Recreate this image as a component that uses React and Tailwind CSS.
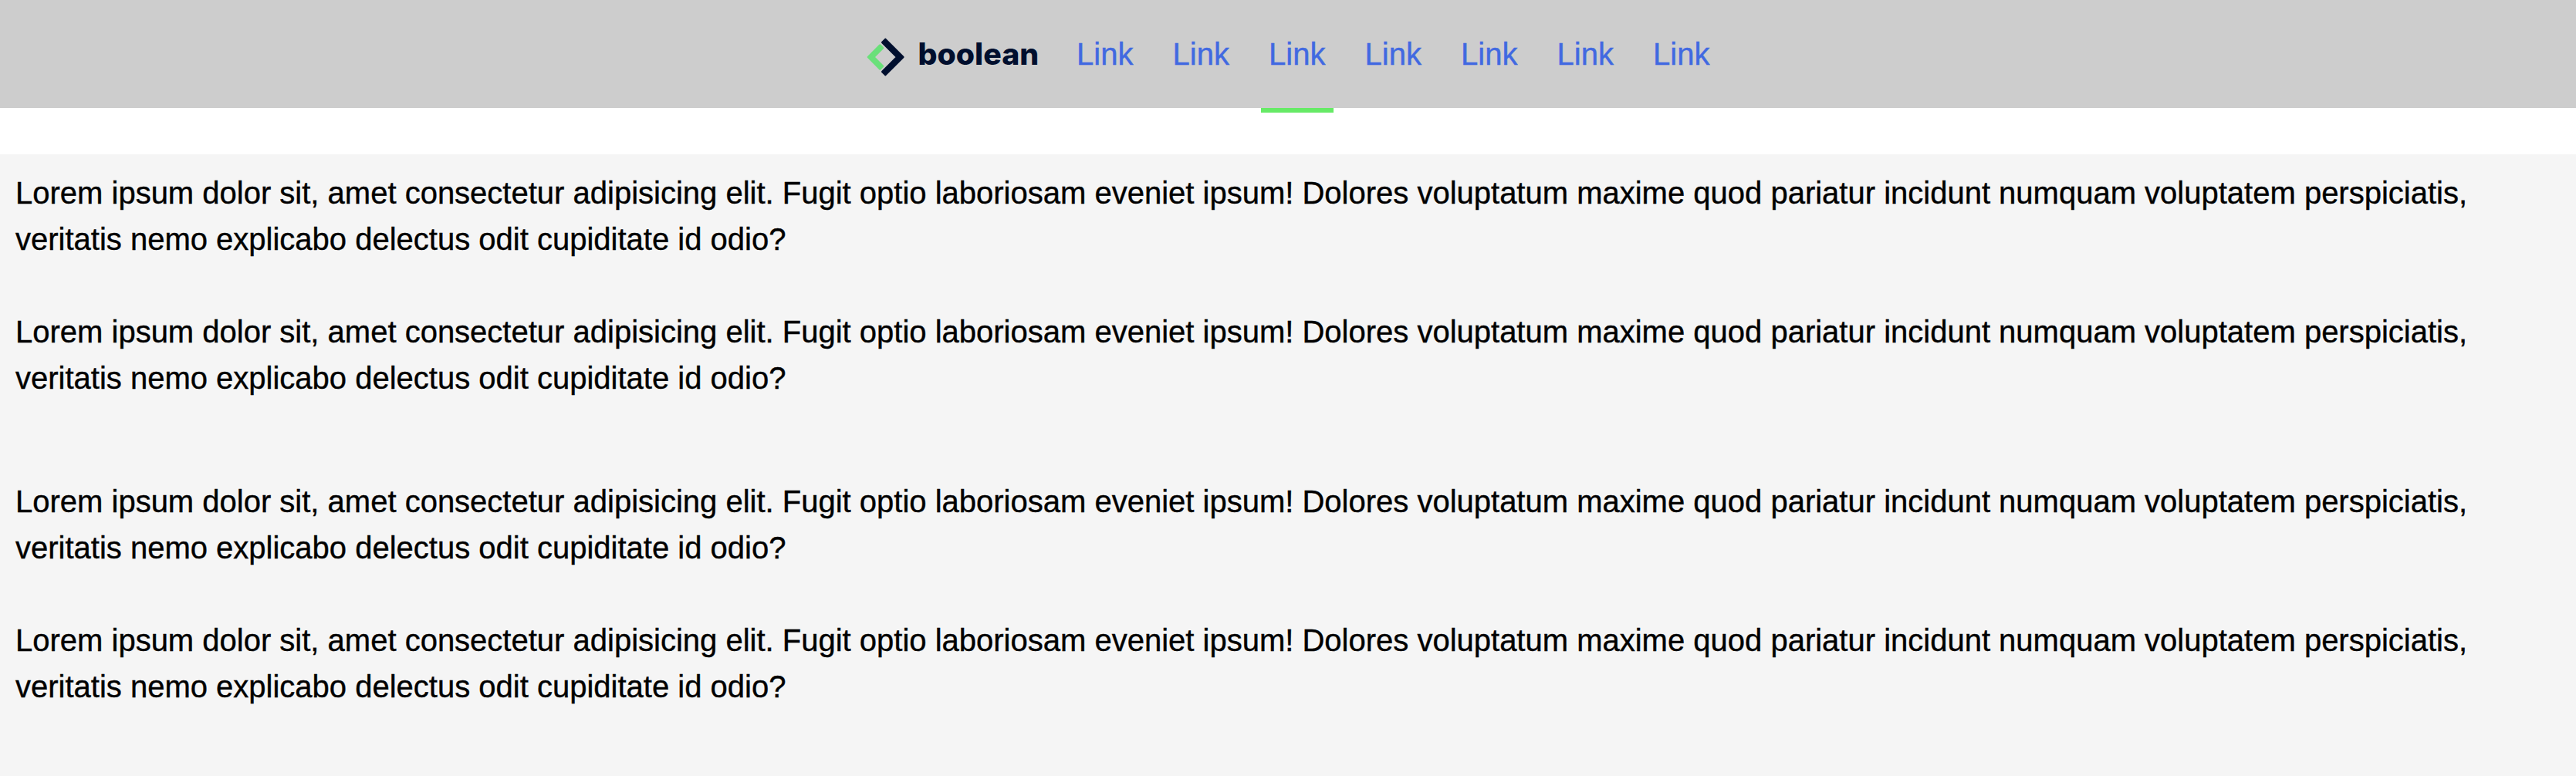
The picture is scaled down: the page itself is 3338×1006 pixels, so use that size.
const LINKS = ["Link", "Link", "Link", "Link", "Link", "Link", "Link"];
const ACTIVE_INDEX = 2;

const LOREM =
  "Lorem ipsum dolor sit, amet consectetur adipisicing elit. Fugit optio laboriosam eveniet ipsum! Dolores voluptatum maxime quod pariatur incidunt numquam voluptatem perspiciatis, veritatis nemo explicabo delectus odit cupiditate id odio?";

function Logo() {
  return (
    <a href="#" className="block px-[10px]" aria-label="boolean">
      <svg className="block h-[60px] w-[221.4px] overflow-visible" viewBox="22.6 10 221.4 60">
        <path
          d="M24.8 44 L39.9 28.9 L43.3 32.3 L31.6 44 L43.3 55.7 L39.9 59.1 Z"
          fill="#6ae07a"
          stroke="#6ae07a"
          strokeWidth="3"
          strokeLinejoin="round"
        />
        <path
          d="M46.9 21.2 L69.7 44 L46.9 66.8 L43.1 63 L62.1 44 L43.1 25 Z"
          fill="#000f2e"
          stroke="#000f2e"
          strokeWidth="3"
          strokeLinejoin="round"
        />
        <text
          x="89.2"
          y="54"
          textLength="156.5"
          lengthAdjust="spacingAndGlyphs"
          className="fill-[#000f2e] font-['Inter',sans-serif] text-[39px] font-extrabold"
        >
          boolean
        </text>
      </svg>
    </a>
  );
}

function Navbar() {
  return (
    <nav className="flex h-[140px] items-center justify-center gap-[31.1px] bg-[#cdcdcd]">
      <Logo />
      {LINKS.map((label, i) => (
        <a
          key={i}
          href="#"
          className="relative flex h-full items-center px-[10px] text-[royalblue] [-webkit-text-stroke:0.4px]"
        >
          {label}
          {i === ACTIVE_INDEX && (
            <span className="absolute left-0 top-full h-[6px] w-[94px] bg-[#66ea66]" />
          )}
        </a>
      ))}
    </nav>
  );
}

function TextBlock() {
  return (
    <section className="h-[400px] p-5">
      <p className="mb-[60px]">{LOREM}</p>
      <p>{LOREM}</p>
    </section>
  );
}

export default function App() {
  return (
    <div className="flex h-[1006px] flex-col overflow-hidden bg-white font-['Liberation_Sans',Arial,sans-serif] text-[40px] leading-[60px] text-black">
      <Navbar />
      <main className="mt-[60px] flex-1 bg-[#f5f5f5] [-webkit-text-stroke:0.4px]">
        <TextBlock />
        <TextBlock />
      </main>
    </div>
  );
}
